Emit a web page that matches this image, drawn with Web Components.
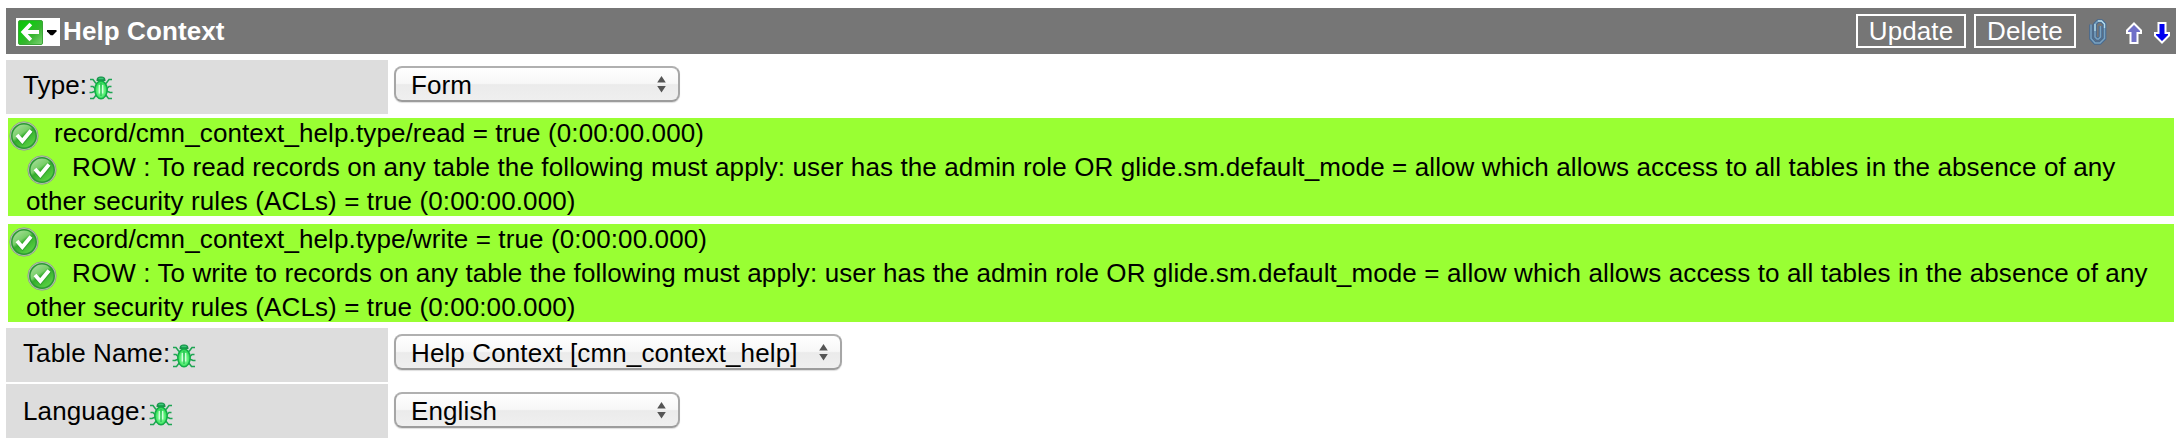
<!DOCTYPE html>
<html lang="en">
<head>
<meta charset="utf-8">
<title>Help Context</title>
<style>
html { overflow: hidden; }
body { margin: 0; background: #fff; color: #000; font: 26px/34px "Liberation Sans", Arial, Helvetica, sans-serif; letter-spacing: .115px; }
</style>
</head>
<body>
<help-form></help-form>
<script>
const define = (name, html) => {
  const t = document.createElement('template');
  t.innerHTML = html;
  customElements.define(name, class extends HTMLElement {
    constructor() {
      super();
      this.attachShadow({ mode: 'open' }).append(t.content.cloneNode(true));
    }
  });
};

define('back-button', `
<style>
:host { display: flex; align-items: center; width: 44px; height: 28px; background: #fff; }
svg { display: block; }
</style>
<svg width="44" height="28" viewBox="0 0 44 28">
  <defs><linearGradient id="g" x1="0" y1="0" x2="1" y2="1"><stop offset="0" stop-color="#16b80e"/><stop offset=".3" stop-color="#12c912"/><stop offset=".6" stop-color="#37b52f"/><stop offset="1" stop-color="#7ed276"/></linearGradient></defs>
  <rect x="2.5" y="2.5" width="24" height="24" rx="1.5" fill="url(#g)" stroke="#3aa537"/>
  <path d="M14.8 6 7.300 14l7.500 8M7 14h16" fill="none" stroke="#fff" stroke-width="3.800"/>
  <path d="M31 12h9.500v1.500l-3.700 3.700h-2.100L31 13.500z" fill="#000"/>
</svg>`);

define('tool-button', `
<style>
:host { display: block; box-sizing: border-box; height: 34px; border: 2px solid #fff; color: #fff; text-align: center; line-height: 30px; white-space: nowrap; }
</style>
<slot></slot>`);

define('clip-icon', `
<style>:host { display: block; width: 18px; height: 26px; } svg { display: block; }</style>
<svg width="18" height="26" viewBox="0 0 18 26" fill="none">
  <path d="M2 5.500v14L6 24h5l4.500-4.500V5L12.500 2H9L6 5v13l2 2h1.500l2-2V7" stroke="#456a92" stroke-width="3.600"/>
  <path d="M2 5.500v14L6 24h5l4.500-4.500V5L12.500 2H9L6 5v13l2 2h1.500l2-2V7" stroke="#7ba3c0" stroke-width="1.500"/>
  <path d="M9 2h3.500l3 3v4M6 5v7" stroke="#b4dcea" stroke-width="1.300"/>
</svg>`);

define('up-icon', `
<style>:host { display: block; width: 18px; height: 24px; } svg { display: block; }</style>
<svg width="18" height="24" viewBox="0 0 18 24">
  <path d="M9 2.500 16 9.500V12h-3.500v10h-7V12H2V9.500z" fill="#7070c8" stroke="#fff" stroke-width="2"/>
</svg>`);

define('down-icon', `
<style>:host { display: block; width: 18px; height: 24px; } svg { display: block; }</style>
<svg width="18" height="24" viewBox="0 0 18 24">
  <path d="M9 21.500 16 14.500V12h-3.500V2h-7v10H2v2.500z" fill="#0000f0" stroke="#fff" stroke-width="2"/>
</svg>`);

define('form-header', `
<style>
:host { display: flex; box-sizing: border-box; height: 46px; padding: 6px 5px 6px 10px; background: #767676; color: #fff; align-items: flex-start; }
back-button { margin-top: 4px; }
h1 { margin: 0 auto 0 3px; font: bold 26px/32px "Liberation Sans", Arial, sans-serif; padding-top: 1px; white-space: nowrap; letter-spacing: .1px; }
.u { width: 110px; margin-right: 8px; }
.d { width: 102px; margin-right: 13px; }
clip-icon { margin: 5px 18px 0 0; }
up-icon { margin: 7px 10px 0 0; }
down-icon { margin-top: 7px; }
</style>
<back-button></back-button>
<h1><slot></slot></h1>
<tool-button class="u">Update</tool-button>
<tool-button class="d">Delete</tool-button>
<clip-icon></clip-icon><up-icon></up-icon><down-icon></down-icon>`);

define('bug-icon', `
<style>:host { display: block; width: 24px; height: 25px; } svg { display: block; }</style>
<svg width="24" height="25" viewBox="0 0 24 25">
  <defs><radialGradient id="b" cx=".5" cy=".55" r=".6"><stop offset="0" stop-color="#a8ffb8"/><stop offset=".5" stop-color="#5cf07a"/><stop offset="1" stop-color="#14c83e"/></radialGradient></defs>
  <path d="M1 4.500h3L7 8.500M23 4.500h-3L17 8.500M1.500 11.500h2.500L6.500 14M22.500 11.500H20L17.500 14M.5 17.500h2.500L6.500 16M23.500 17.500H21L17.500 16M1 23.500h3.500L7.500 19.500M23 23.500h-3.500L16.500 19.500" fill="none" stroke="#1ea553" stroke-width="1.500"/>
  <path d="M7.500 6C7.500 2.500 9 1.500 12 1.500S16.500 2.500 16.500 6z" fill="#18934a"/>
  <path d="M9.500 3.500h5" stroke="#3cc878" stroke-width="1.500"/>
  <ellipse cx="12" cy="14.800" rx="6.200" ry="8.900" fill="url(#b)" stroke="#12ac46" stroke-width="1.500"/>
  <path d="M12 8v13" stroke="#1cb44c" stroke-width="1.100"/>
  <path d="M10.300 10v8.500M13.700 10v8.500" stroke="#dcffe2" stroke-width="1.200"/>
</svg>`);

define('select-box', `
<style>
:host { display: flex; box-sizing: border-box; width: 286px; height: 36px; padding: 0 12px 0 15px; border: 2px solid #a6a6a6; border-color: #b0b0b0 #a6a6a6 #9c9c9c; border-radius: 8px; background: linear-gradient(#fff 0, #f7f7f7 48%, #ebebeb 52%, #efefef 100%); box-shadow: 0 1px 1px #0002; justify-content: space-between; line-height: 34px; white-space: nowrap; }
svg { display: block; margin-top: 8px; }
</style>
<span><slot></slot></span>
<svg width="9" height="17" viewBox="0 0 9 17"><path d="M4.500 0 8.800 6.500H.2zM4.500 16.500 8.800 10H.2z" fill="#555"/></svg>`);

define('form-row', `
<style>
:host { display: flex; height: 54px; }
.label { display: flex; box-sizing: border-box; width: 382px; padding: calc(8px + var(--shift, 0px)) 0 0 17px; background: #ddd; white-space: nowrap; }
bug-icon { margin: 7px 0 0 2px; }
.field { padding: calc(6px + var(--shift, 0px)) 0 0 6px; }
</style>
<div class="label"><slot name="label"></slot><bug-icon></bug-icon></div>
<div class="field"><slot></slot></div>`);

define('check-icon', `
<style>:host { display: block; flex: none; width: 30px; height: 30px; } svg { display: block; }</style>
<svg width="30" height="30" viewBox="0 0 30 30">
  <defs><linearGradient id="c" x1="0" y1="0" x2=".7" y2="1"><stop offset="0" stop-color="#b4e2a8"/><stop offset=".45" stop-color="#78cf68"/><stop offset=".55" stop-color="#34ad2c"/><stop offset="1" stop-color="#5cd444"/></linearGradient></defs>
  <circle cx="15" cy="15" r="14.200" fill="#bcc8b4" stroke="#93a58a" stroke-width="1"/>
  <circle cx="15" cy="15" r="12.200" fill="url(#c)" stroke="#2a9834" stroke-width="1.500"/>
  <path d="M8.500 15l5 6 8.800-11" fill="none" stroke="#178a20" stroke-width="4.500" opacity=".4"/>
  <path d="M8 14l5.300 6L22 9.500" fill="none" stroke="#fff" stroke-width="3.800"/>
</svg>`);

define('acl-result', `
<style>
:host { display: block; box-sizing: border-box; height: 98px; margin: 0 2px; background: #9f3; white-space: nowrap; }
.line { display: flex; height: 34px; }
.text { margin-top: -2px; }
check-icon { margin: 3px 15px 0 1px; }
.sub { padding-left: 18px; }
.last { height: 30px; }
::slotted(*) { display: block; }
</style>
<div class="line"><check-icon></check-icon><div class="text"><slot name="rule"></slot></div></div>
<div class="line sub"><check-icon></check-icon><div class="text"><slot name="reason"></slot></div></div>
<div class="line sub last"><div class="text"><slot name="rest"></slot></div></div>`);

define('help-form', `
<style>
:host { display: block; padding: 8px 7px 0 6px; height: 442px; box-sizing: border-box; overflow: hidden; }
form-header { margin-bottom: 6px; }
acl-result { margin-top: 4px; }
acl-result + acl-result { margin-top: 8px; }
acl-result + form-row { margin-top: 6px; }
.last { margin-top: 2px; --shift: 2px; }
.wide { width: 448px; }
</style>
<form-header>Help Context</form-header>
<form-row><span slot="label">Type:</span><select-box>Form</select-box></form-row>
<acl-result>
  <span slot="rule">record/cmn_context_help.type/read = true (0:00:00.000)</span>
  <span slot="reason">ROW : To read records on any table the following must apply: user has the admin role OR glide.sm.default_mode = allow which allows access to all tables in the absence of any</span>
  <span slot="rest">other security rules (ACLs) = true (0:00:00.000)</span>
</acl-result>
<acl-result>
  <span slot="rule">record/cmn_context_help.type/write = true (0:00:00.000)</span>
  <span slot="reason">ROW : To write to records on any table the following must apply: user has the admin role OR glide.sm.default_mode = allow which allows access to all tables in the absence of any</span>
  <span slot="rest">other security rules (ACLs) = true (0:00:00.000)</span>
</acl-result>
<form-row><span slot="label">Table Name:</span><select-box class="wide">Help Context [cmn_context_help]</select-box></form-row>
<form-row class="last"><span slot="label">Language:</span><select-box>English</select-box></form-row>`);
</script>
</body>
</html>
